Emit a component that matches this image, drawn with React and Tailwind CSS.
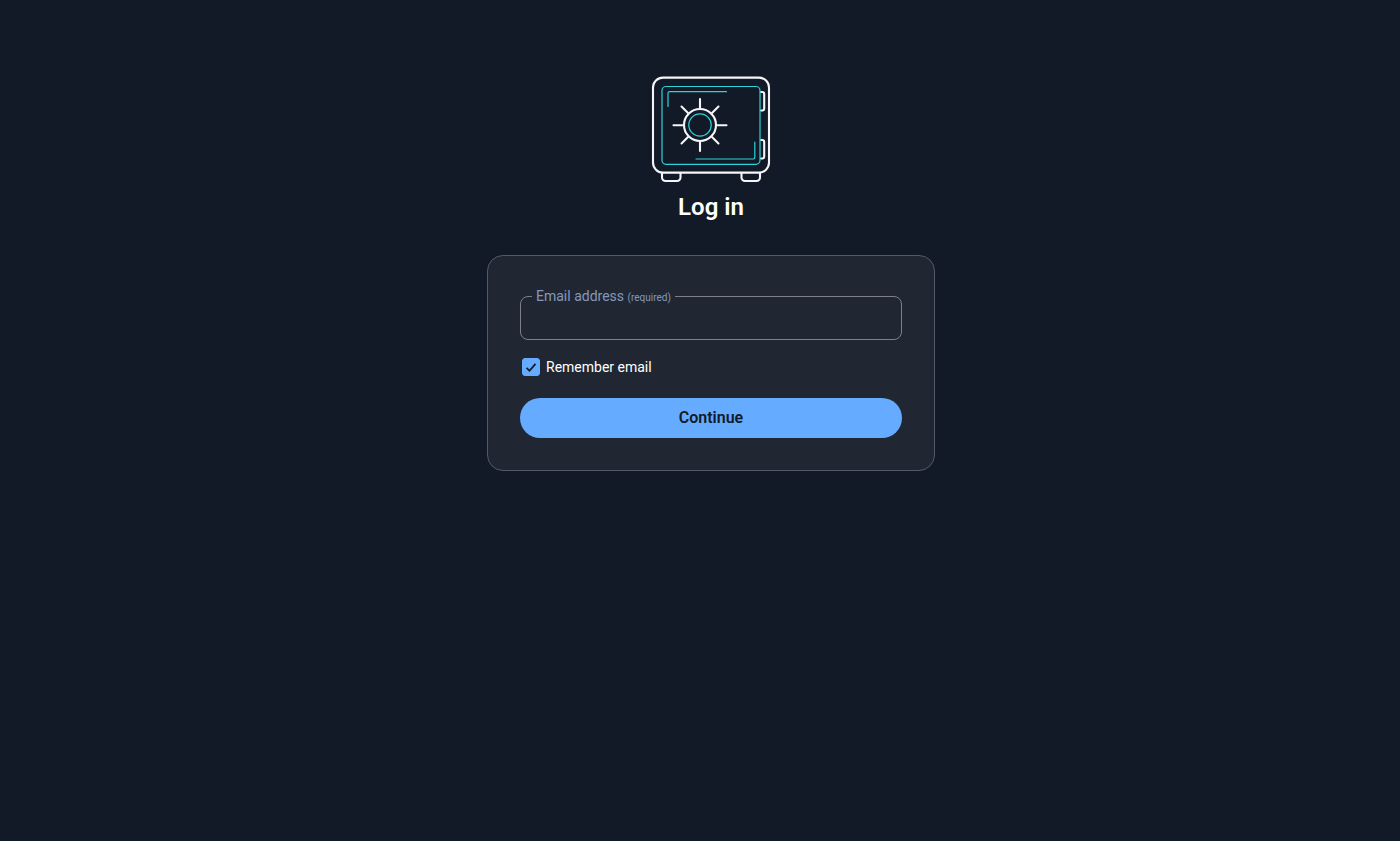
import { useState } from 'react';

function VaultLogo() {
  return (
    <svg width="120" height="108" viewBox="0 0 120 108" fill="none" strokeLinecap="round" strokeLinejoin="round" aria-hidden="true">
      <g stroke="#f4f5fa" strokeWidth="2.1">
        <rect x="2" y="1.6" width="116" height="95" rx="10" />
        <path d="M11 97v4.500a3.500 3.500 0 0 0 3.500 3.500h11.500a3.500 3.500 0 0 0 3.500-3.500V97" />
        <path d="M90.500 97v4.500a3.500 3.500 0 0 0 3.500 3.500h11.500a3.500 3.500 0 0 0 3.500-3.500V97" />
        <path d="M110 16h1.200a2 2 0 0 1 2 2v14.500a2 2 0 0 1-2 2H110" />
        <path d="M110 64h1.200a2 2 0 0 1 2 2v14.500a2 2 0 0 1-2 2H110" />
        <circle cx="49" cy="49" r="16" />
        <path d="M49 23v9M49 66v9M22.500 49.200h10M65.500 49.200h10M30.500 30.500l6.500 6.500M67.500 30.500l-6.500 6.500M30.500 67.500l6.500-6.500M67.500 67.500l-6.500-6.500" />
      </g>
      <g stroke="#2cd3da" strokeWidth="1.2">
        <rect x="11" y="10.500" width="98" height="77.800" rx="4" />
        <path d="M17 30.500V17.200a1.500 1.500 0 0 1 1.500-1.500H75.500" />
        <path d="M103.800 66v15.500a1.500 1.500 0 0 1-1.500 1.500H45" />
        <circle cx="49" cy="49" r="11.200" />
      </g>
    </svg>
  );
}

function EmailField({ value, onChange }) {
  return (
    <div className="relative">
      <label
        htmlFor="email"
        className="absolute -top-2 left-3 px-1 bg-[#202733] text-sm leading-4 text-[#8598bc]"
      >
        Email address <span className="text-[10px]">(required)</span>
      </label>
      <input
        id="email"
        type="email"
        value={value}
        onChange={onChange}
        className="block w-full h-11 px-3 rounded-lg border border-[#7b808a] bg-transparent text-white outline-none"
      />
    </div>
  );
}

function RememberCheckbox({ checked, onChange }) {
  return (
    <div className="flex items-center gap-1.5 pl-0.5">
      <span className="relative flex">
        <input
          id="remember"
          type="checkbox"
          checked={checked}
          onChange={onChange}
          className="size-[18px] appearance-none rounded-[3px] border border-[#7b808a] checked:border-[#65abff] checked:bg-[#65abff]"
        />
        {checked && (
          <svg className="absolute inset-0 pointer-events-none" width="18" height="18" viewBox="0 0 18 18" fill="none">
            <path d="M4.600 9.900l2.900 2.900L13.500 5.800" stroke="#121a27" strokeWidth="1.800" />
          </svg>
        )}
      </span>
      <label htmlFor="remember" className="text-sm leading-[18px] text-white">
        Remember email
      </label>
    </div>
  );
}

export default function App() {
  const [email, setEmail] = useState('');
  const [remember, setRemember] = useState(true);

  return (
    <main className="min-h-screen flex flex-col items-center bg-[#121a27] pt-[76px] pl-[22px] font-['Roboto',sans-serif]">
      <VaultLogo />
      <h1 className="mt-[7px] text-2xl leading-8 font-semibold text-white">Log in</h1>
      <form
        onSubmit={(e) => e.preventDefault()}
        className="mt-8 w-full max-w-md flex flex-col rounded-2xl border border-[#525a68] bg-[#202733] px-8 pt-10 pb-8"
      >
        <EmailField value={email} onChange={(e) => setEmail(e.target.value)} />
        <div className="my-[18px]">
          <RememberCheckbox checked={remember} onChange={(e) => setRemember(e.target.checked)} />
        </div>
        <button type="submit" className="mt-1 h-10 rounded-full bg-[#65abff] text-base font-semibold text-[#121a27]">
          Continue
        </button>
      </form>
    </main>
  );
}
